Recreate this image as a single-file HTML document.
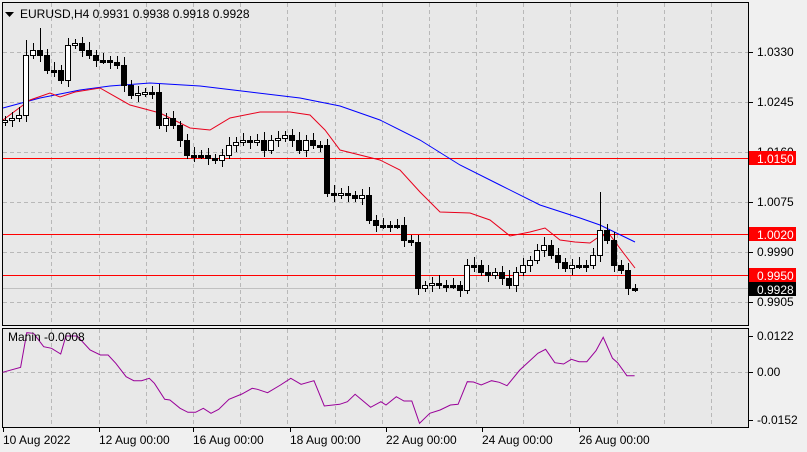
<!DOCTYPE html>
<html><head><meta charset="utf-8"><style>
body{margin:0;width:807px;height:452px;background:#f0f0f0;overflow:hidden;font-family:"Liberation Sans",sans-serif}
svg{position:absolute;left:0;top:0}
text{font-family:"Liberation Sans",sans-serif;font-size:12px}
</style></head><body>
<svg id="s" width="807" height="452" xmlns="http://www.w3.org/2000/svg">
<rect x="0" y="0" width="807" height="452" fill="#f0f0f0"/>
<rect x="2.5" y="2.5" width="746" height="323" fill="#e8e8e8" stroke="#000"/>
<rect x="2.5" y="328.5" width="746" height="99" fill="#e8e8e8" stroke="#000"/>
<g id="grid" stroke="#b8b8b8" stroke-dasharray="4,3" stroke-width="1"></g>
<g id="lev"></g>
<polyline fill="none" stroke="#0000ff" stroke-width="1" points="3,108 40,98 80,90 110,86 150,83 200,86 250,92 300,98 340,106 380,120 420,140 460,165 500,185 540,205 580,218 600,225 635,242"/>
<polyline fill="none" stroke="#e8001c" stroke-width="1" points="3,120 30,100 50,93 60,97 75,92 100,88 130,105 160,113 190,128 210,130 230,118 260,112 290,112 310,115 325,130 340,150 380,160 400,170 420,192 440,212 470,213 490,220 510,236 530,232 545,228 560,240 575,242 590,243 600,236 610,235 625,255 635,268"/>
<g id="c"></g>
<polyline id="osc" fill="none" stroke="#990099" stroke-width="1"/>
<path d="M5,12 h9 l-4.5,5z" fill="#000"/>
<text x="20" y="18">EURUSD,H4   0.9931 0.9938 0.9918 0.9928</text>
<text x="8" y="341" font-size="11">Manin -0.0008</text>
<g id="ax"></g>
</svg>
<script>
var NS="http://www.w3.org/2000/svg";
function el(p,t,a,txt){var e=document.createElementNS(NS,t);for(var k in a)e.setAttribute(k,a[k]);if(txt)e.textContent=txt;document.getElementById(p).appendChild(e);return e;}
var vx=[51,99,146,193,240,287,335,382,429,476,523,570,617,664,711];
vx.forEach(function(x){el("grid","line",{x1:x+.5,y1:3,x2:x+.5,y2:325});el("grid","line",{x1:x+.5,y1:329,x2:x+.5,y2:427});});
[52,102,152,202,252,302].forEach(function(y){el("grid","line",{x1:3,y1:y+.5,x2:748,y2:y+.5});});
el("grid","line",{x1:3,y1:372.5,x2:748,y2:372.5});
el("lev","line",{x1:3,y1:288.5,x2:748,y2:288.5,stroke:"#c0c0c0"});
[158,234,275].forEach(function(y){el("lev","line",{x1:3,y1:y+.5,x2:748,y2:y+.5,stroke:"#ff0000"});});
var cl=[120,118,115,55,50,55,70,70,80,45,43,50,55,60,60,62,65,85,95,93,92,92,125,118,125,140,155,155,155,158,160,155,145,142,140,142,140,150,140,138,135,140,150,140,145,145,193,195,193,195,198,195,220,225,225,225,225,240,242,288,285,283,285,285,285,290,265,265,272,275,272,278,285,272,265,260,250,245,255,262,268,265,265,265,255,230,240,265,270,288,288];
var o=122;
for(var i=0;i<cl.length;i++){var x=5+i*7,c=cl[i];var hi=Math.min(o,c)-4-(i*7%5),lo=Math.max(o,c)+4+(i*3%6);
if(i==85)hi=192; if(i==3)hi=40; if(i==5)hi=28;
el("c","line",{x1:x+.5,y1:hi,x2:x+.5,y2:lo,stroke:"#000"});
var t=Math.min(o,c),h=Math.max(2,Math.abs(o-c));
el("c","rect",{x:x-2.5,y:t+.5,width:5,height:h,fill:c<o?"#fff":"#000",stroke:"#000"});o=c;}
var op=[[5,157],[40,142],[52,38],[65,40],[85,80],[100,85],[118,102],[128,48],[150,48],[175,90],[195,105],[210,105],[225,130],[245,170],[260,182],[275,182],[290,175],[300,190],[320,238],[330,240],[350,265],[365,277],[380,277],[395,265],[410,280],[425,268],[445,238],[470,222],[490,205],[500,208],[520,218],[545,195],[565,175],[585,193],[610,182],[630,258],[660,253],[675,245],[690,223],[720,262],[740,245],[750,255],[770,230],[785,243],[800,243],[815,310],[835,280],[855,270],[875,255],[890,253],[908,185],[920,186],[935,195],[955,182],[970,187],[985,197],[1010,150],[1045,100],[1060,88],[1078,128],[1095,132],[1110,118],[1125,125],[1140,125],[1158,92],[1172,52],[1190,115],[1200,128],[1218,167],[1233,167]];
document.getElementById("osc").setAttribute("points",op.map(function(p){return (p[0]*0.5147).toFixed(1)+","+(320+p[1]/3).toFixed(1)}).join(" "));
[["1.0330",52],["1.0245",102],["1.0160",152],["1.0075",202],["0.9990",252],["0.9905",302]].forEach(function(a){el("ax","line",{x1:749,y1:a[1]+.5,x2:753,y2:a[1]+.5,stroke:"#000"});el("ax","text",{x:757,y:a[1]+4},a[0]);});
[["1.0150",158,"#ff0000"],["1.0020",234,"#ff0000"],["0.9950",275,"#ff0000"],["0.9928",289,"#000"]].forEach(function(a){el("ax","rect",{x:749,y:a[1]-7,width:47,height:14,fill:a[2]});el("ax","text",{x:757,y:a[1]+5,fill:"#fff"},a[0]);});
[["0.0122",336],["0.00",372],["-0.0152",420]].forEach(function(a){el("ax","line",{x1:749,y1:a[1]+.5,x2:753,y2:a[1]+.5,stroke:"#000"});el("ax","text",{x:757,y:a[1]+4},a[0]);});
[["10 Aug 2022",3],["12 Aug 00:00",99],["16 Aug 00:00",193],["18 Aug 00:00",290],["22 Aug 00:00",386],["24 Aug 00:00",482],["26 Aug 00:00",579]].forEach(function(a){el("ax","line",{x1:a[1]+.5,y1:428,x2:a[1]+.5,y2:432,stroke:"#000"});el("ax","text",{x:a[1],y:444},a[0]);});
</script>
</body></html>
